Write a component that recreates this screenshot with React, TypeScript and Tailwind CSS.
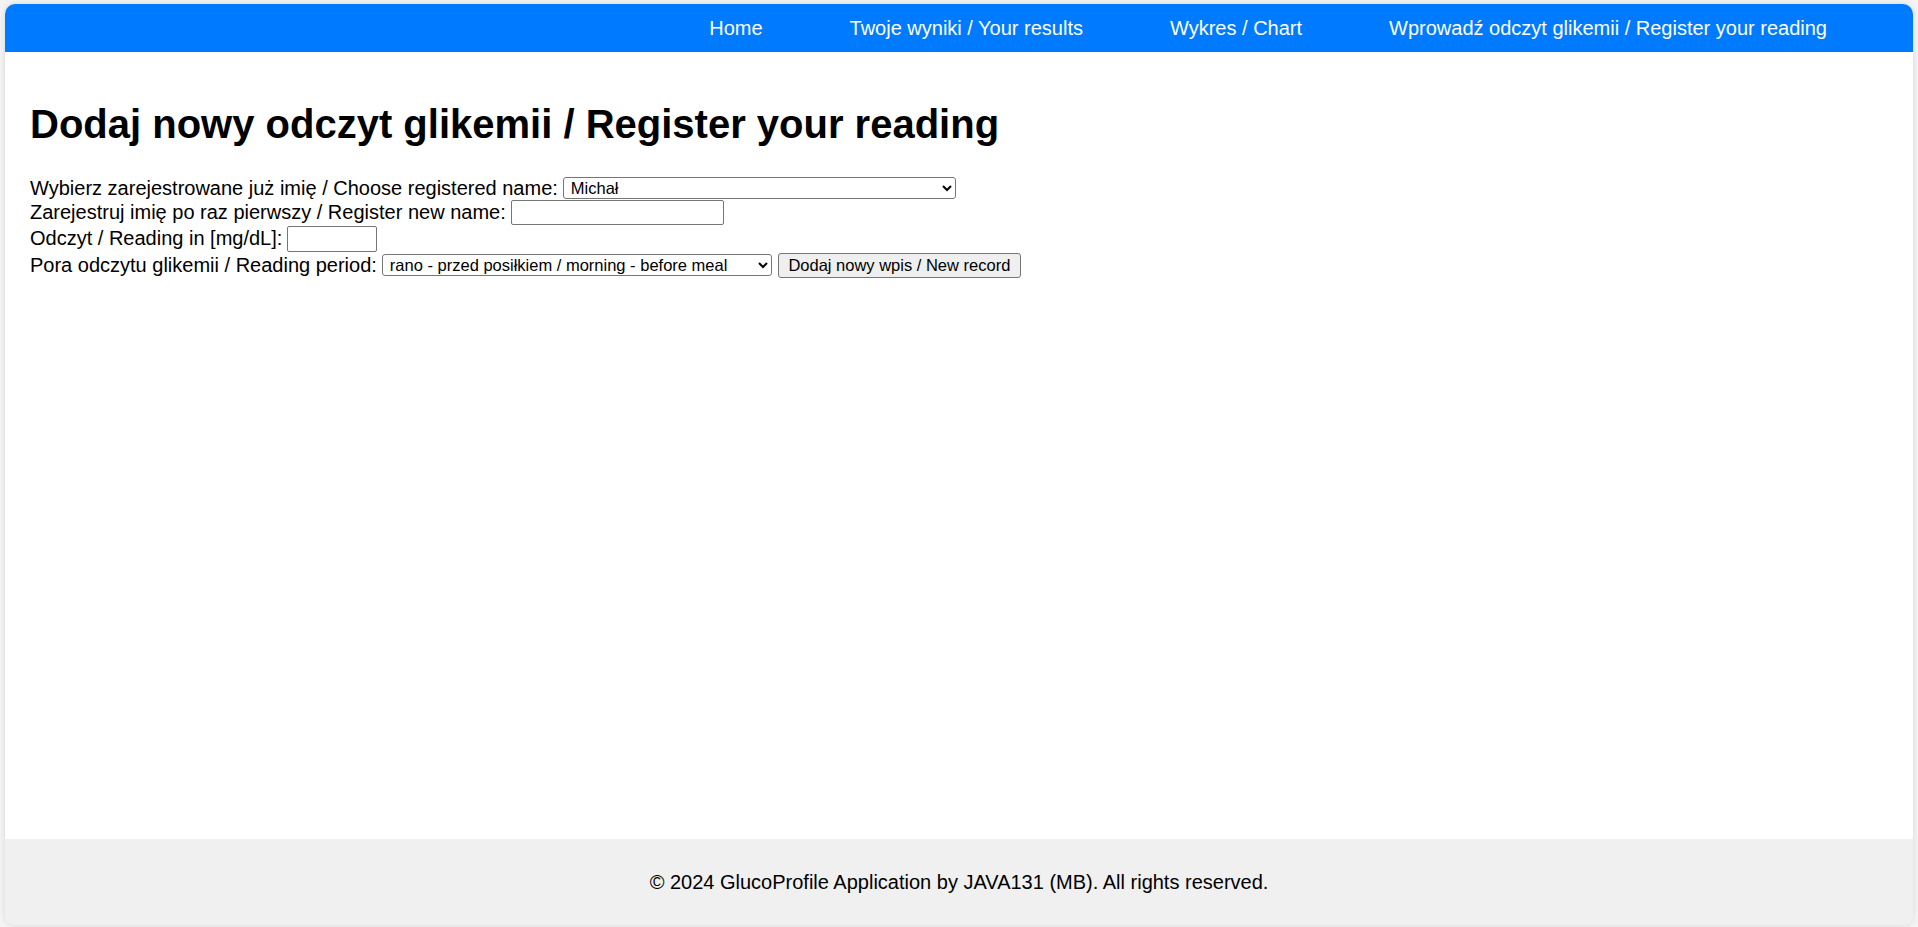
import React from 'react';

const navLinks = [
  'Home',
  'Twoje wyniki / Your results',
  'Wykres / Chart',
  'Wprowadź odczyt glikemii / Register your reading',
];

const App = () => {
  return (
    <div className="min-h-screen bg-[#f4f4f4] px-[5px] pt-[4px] pb-[2px] font-['Liberation_Sans',Arial,sans-serif] text-black">
      <div className="flex h-[921px] flex-col overflow-hidden rounded-[10px] bg-white shadow-[0_0_6px_rgba(0,0,0,0.12)]">
        {/* Navigation */}
        <nav className="h-[48px] shrink-0 bg-[#007bff]">
          <ul className="flex h-full items-center justify-end gap-[87px] pr-[86px]">
            {navLinks.map((link) => (
              <li key={link}>
                <a href="#" className="text-[20px] text-white">
                  {link}
                </a>
              </li>
            ))}
          </ul>
        </nav>

        {/* Main content */}
        <main className="flex-1 pl-[25px] pt-[49px]">
          <h1 className="text-[40px] font-bold leading-[46px]">
            Dodaj nowy odczyt glikemii / Register your reading
          </h1>

          <form className="mt-[29px] flex flex-col text-[20px] leading-[23px]">
            <div className="flex h-[24px] items-center gap-[5px]">
              <label>Wybierz zarejestrowane już imię / Choose registered name:</label>
              <select className="h-[22px] w-[393px] rounded-[3px] border border-[#767676] bg-white pl-[3px] text-[16.5px]">
                <option>Michał</option>
              </select>
            </div>
            <div className="flex h-[25px] items-center gap-[5px]">
              <label>Zarejestruj imię po raz pierwszy / Register new name:</label>
              <input type="text" className="h-[25px] w-[213px] rounded-[2px] border border-[#767676] bg-white" />
            </div>
            <div className="flex h-[27px] items-center gap-[5px]">
              <label>Odczyt / Reading in [mg/dL]:</label>
              <input type="text" className="h-[26px] w-[90px] rounded-[2px] border border-[#767676] bg-white" />
            </div>
            <div className="flex h-[26px] items-center gap-[5px]">
              <label>Pora odczytu glikemii / Reading period:</label>
              <select className="h-[22px] w-[390px] rounded-[3px] border border-[#767676] bg-white pl-[3px] text-[16.5px]">
                <option>rano - przed posiłkiem / morning - before meal</option>
                <option>rano - po posiłku / morning - after meal</option>
              </select>
              <button type="button" className="ml-[1px] h-[25px] w-[243px] rounded-[3px] border border-[#767676] bg-[#efefef] text-[16.5px]">
                Dodaj nowy wpis / New record
              </button>
            </div>
          </form>
        </main>

        {/* Footer */}
        <footer className="flex h-[86px] shrink-0 items-center justify-center bg-[#f0f0f0] text-[20px]">
          © 2024 GlucoProfile Application by JAVA131 (MB). All rights reserved.
        </footer>
      </div>
    </div>
  );
};

export default App;
